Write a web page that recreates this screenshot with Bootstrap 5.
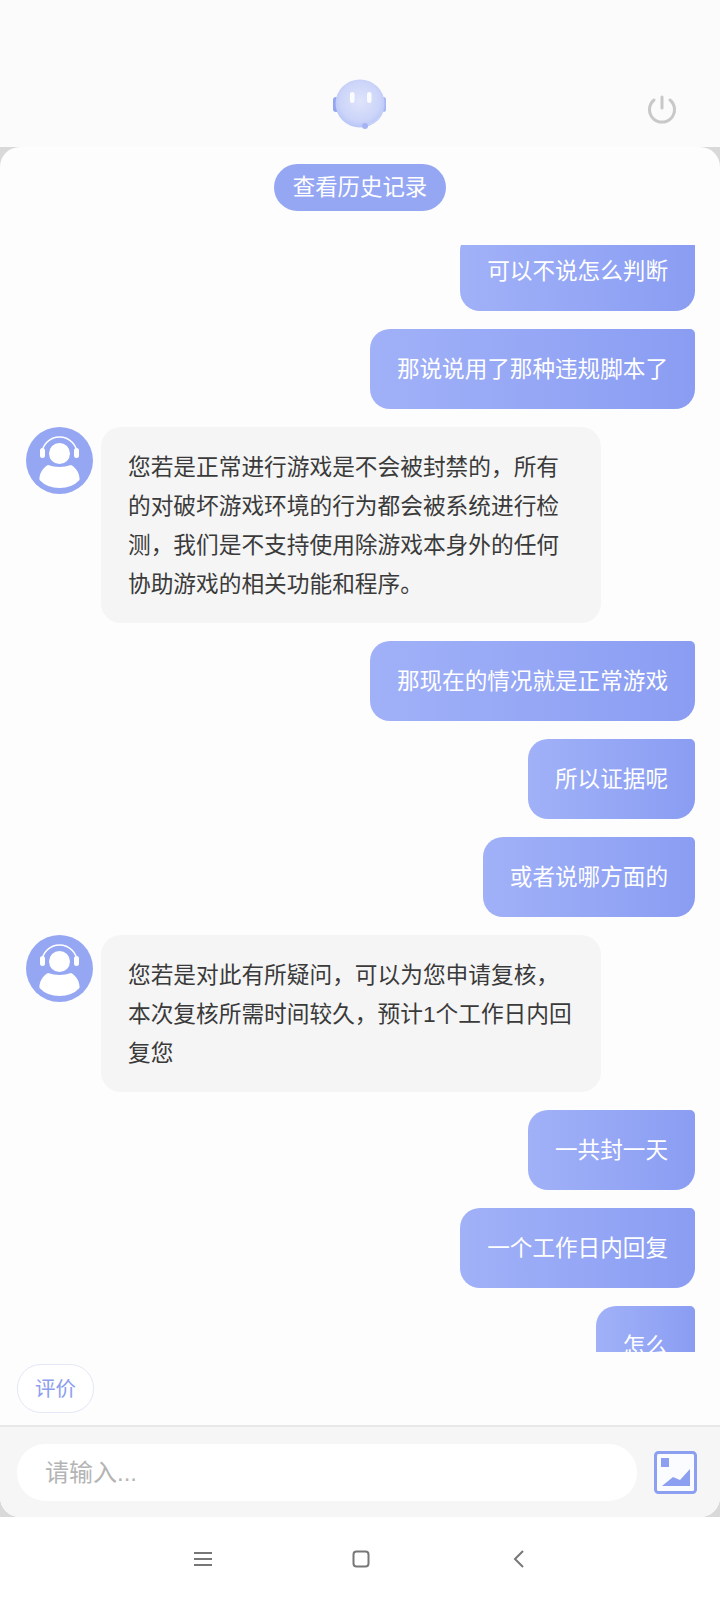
<!DOCTYPE html>
<html lang="zh-CN">
<head>
    <meta charset="UTF-8">
    <meta name="viewport" content="width=device-width, initial-scale=1.0">
    <title>在线客服</title>
    <link href="https://cdn.jsdelivr.net/npm/bootstrap@5.3.0/dist/css/bootstrap.min.css" rel="stylesheet">
    <style>
        html, body { height: 1600px; overflow: hidden; }
        body {
            background-color: #d9d9d9;
            color: #3a3a3a;
            font-family: "Liberation Sans", "Noto Sans CJK SC", sans-serif;
            font-size: 22.7px;
        }
        .top-bar { height: 147px; background: #fbfbfb; padding-top: 79px; padding-right: 42px; padding-left: 333px; }
        .logo-box { width: 54px; height: 54px; filter: blur(.6px); }
        .power-box { width: 32px; height: 32px; margin-top: 15px; filter: blur(.4px); }
        .chat-panel { height: 1370px; border-radius: 20px; background: #fdfdfd; overflow: hidden; }
        .history-row { height: 98px; padding-top: 17px; }
        .history-btn {
            width: 172px; height: 47px; line-height: 47px; padding: 0;
            border-radius: 24px; background: #95a7f3; color: #fff; font-size: 22.4px; border: 0;
        }
        .chat-view { height: 1107px; overflow: hidden; }
        .chat-scroll { margin-top: -14px; padding: 0 25px 0 26px; gap: 18px; }
        .msg-out {
            align-self: flex-end; padding: 21px 27px 20px; line-height: 39px; color: #fff; font-size: 22.6px;
            background: linear-gradient(to right, #a1b1f8, #8a9df2);
            border-radius: 20px 5px 20px 20px;
        }
        .msg-in { gap: 8px; }
        .agent-pic { width: 67px; height: 67px; flex: none; filter: blur(.3px); }
        .msg-text {
            width: 500px; padding: 21px 27px 19px; line-height: 39px; color: #3a3a3a;
            background: #f5f5f5; border-radius: 20px;
        }
        .rate-row { height: 73px; padding: 12px 17px 0; }
        .rate-btn {
            width: 77px; height: 49px; padding: 0; line-height: 45px; font-size: 20.5px; color: #8c9eee;
            background: #fff; border: 1.5px solid #e4e7f6; border-radius: 24px;
        }
        .input-bar { height: 92px; background: #f6f6f6; border-top: 2px solid #e8e8e8; padding: 17px 23px 0 17px; }
        .msg-input {
            width: 620px; height: 57px; padding: 0 28px; border: 0; border-radius: 28px;
            background: #fff; font-size: 24px; color: #333;
        }
        .msg-input::placeholder { color: #b4b4b4; }
        .pic-box { width: 43px; height: 43px; margin-top: 7px; filter: blur(.3px); }
        .sys-nav { height: 83px; background: #fff; padding-top: 31px; padding-left: 1px; gap: 135.5px; }
        .nav-icon { width: 22px; height: 22px; }
    </style>
</head>
<body>
    <div class="top-bar d-flex justify-content-between align-items-start">
        <svg class="logo-box" viewBox="0 0 54 54">
            <defs>
                <radialGradient id="faceFill" cx="50%" cy="45%" r="58%">
                    <stop offset="0" stop-color="#dfe4fb"/>
                    <stop offset="0.7" stop-color="#ccd5f9"/>
                    <stop offset="1" stop-color="#b4c1f6"/>
                </radialGradient>
            </defs>
            <rect x="0" y="18" width="6" height="15" rx="3" fill="#93a5f1"/>
            <rect x="48" y="18" width="5" height="15" rx="2.5" fill="#a9b7f5"/>
            <ellipse cx="27" cy="24.5" rx="24.5" ry="24" fill="url(#faceFill)"/>
            <path d="M50 31 Q47 43 33 46" fill="none" stroke="#c6d0f8" stroke-width="1.5"/>
            <circle cx="32" cy="47" r="3" fill="#a4b3f4"/>
            <rect x="17" y="13" width="4.5" height="11" rx="2.2" fill="#fff" opacity=".9"/>
            <rect x="34" y="13" width="4.5" height="11" rx="2.2" fill="#fff" opacity=".9"/>
        </svg>
        <svg class="power-box" viewBox="0 0 32 32" fill="none" stroke="#c8c8c8" stroke-width="3" stroke-linecap="round">
            <path d="M16 3 V14"/>
            <path d="M8 6 A12.5 12.5 0 1 0 24 6"/>
        </svg>
    </div>

    <div class="chat-panel d-flex flex-column">
        <div class="history-row text-center">
            <button type="button" class="btn history-btn">查看历史记录</button>
        </div>
        <div class="chat-view">
            <div class="chat-scroll d-flex flex-column">
                <div class="msg-out">可以不说怎么判断</div>
                <div class="msg-out">那说说用了那种违规脚本了</div>
                <div class="msg-in d-flex align-items-start">
                    <svg class="agent-pic" viewBox="0 0 67 67">
                        <circle cx="33.5" cy="33.5" r="33.5" fill="#95a7f3"/>
                        <path d="M16 27 A17.5 17 0 0 1 51 27" fill="none" stroke="#fff" stroke-width="1.6"/>
                        <rect x="14" y="21" width="5" height="10" rx="2.5" fill="#fff"/>
                        <rect x="48" y="21" width="5" height="10" rx="2.5" fill="#fff"/>
                        <circle cx="33.5" cy="26.5" r="10.5" fill="#fff"/>
                        <path d="M22 38 Q33.5 42 45 38 C51 41 54 48 53.5 53 Q46 61 33.5 61 Q21 61 13.5 53 C13 48 16 41 22 38 Z" fill="#fff"/>
                    </svg>
                    <div class="msg-text">您若是正常进行游戏是不会被封禁的，所有的对破坏游戏环境的行为都会被系统进行检测，我们是不支持使用除游戏本身外的任何协助游戏的相关功能和程序。</div>
                </div>
                <div class="msg-out">那现在的情况就是正常游戏</div>
                <div class="msg-out">所以证据呢</div>
                <div class="msg-out">或者说哪方面的</div>
                <div class="msg-in d-flex align-items-start">
                    <svg class="agent-pic" viewBox="0 0 67 67">
                        <circle cx="33.5" cy="33.5" r="33.5" fill="#95a7f3"/>
                        <path d="M16 27 A17.5 17 0 0 1 51 27" fill="none" stroke="#fff" stroke-width="1.6"/>
                        <rect x="14" y="21" width="5" height="10" rx="2.5" fill="#fff"/>
                        <rect x="48" y="21" width="5" height="10" rx="2.5" fill="#fff"/>
                        <circle cx="33.5" cy="26.5" r="10.5" fill="#fff"/>
                        <path d="M22 38 Q33.5 42 45 38 C51 41 54 48 53.5 53 Q46 61 33.5 61 Q21 61 13.5 53 C13 48 16 41 22 38 Z" fill="#fff"/>
                    </svg>
                    <div class="msg-text">您若是对此有所疑问，可以为您申请复核，本次复核所需时间较久，预计1个工作日内回复您</div>
                </div>
                <div class="msg-out">一共封一天</div>
                <div class="msg-out">一个工作日内回复</div>
                <div class="msg-out">怎么</div>
            </div>
        </div>
        <div class="rate-row">
            <button type="button" class="btn rate-btn">评价</button>
        </div>
        <div class="input-bar d-flex justify-content-between align-items-start">
            <input type="text" class="msg-input" placeholder="请输入...">
            <svg class="pic-box" viewBox="0 0 43 43">
                <rect x="1.5" y="1.5" width="40" height="40" rx="3" fill="#fbfcff" stroke="#8c9ff0" stroke-width="3"/>
                <rect x="7" y="7" width="8" height="9" fill="#8c9ff0"/>
                <path d="M8 35 L19 26 L26 29 L36 18 V35 Z" fill="#8c9ff0"/>
            </svg>
        </div>
    </div>

    <div class="sys-nav d-flex justify-content-center align-items-start">
        <svg class="nav-icon" viewBox="0 0 22 22" fill="none" stroke="#777" stroke-width="2">
            <path d="M2 5 H20 M2 11 H20 M2 17 H20"/>
        </svg>
        <svg class="nav-icon" viewBox="0 0 22 22" fill="none" stroke="#777" stroke-width="2">
            <rect x="3.5" y="3.5" width="15" height="15" rx="3"/>
        </svg>
        <svg class="nav-icon" viewBox="0 0 22 22" fill="none" stroke="#777" stroke-width="2">
            <path d="M16 3 L8 11 L16 19"/>
        </svg>
    </div>

    <script src="https://cdn.jsdelivr.net/npm/bootstrap@5.3.0/dist/js/bootstrap.bundle.min.js"></script>
</body>
</html>
